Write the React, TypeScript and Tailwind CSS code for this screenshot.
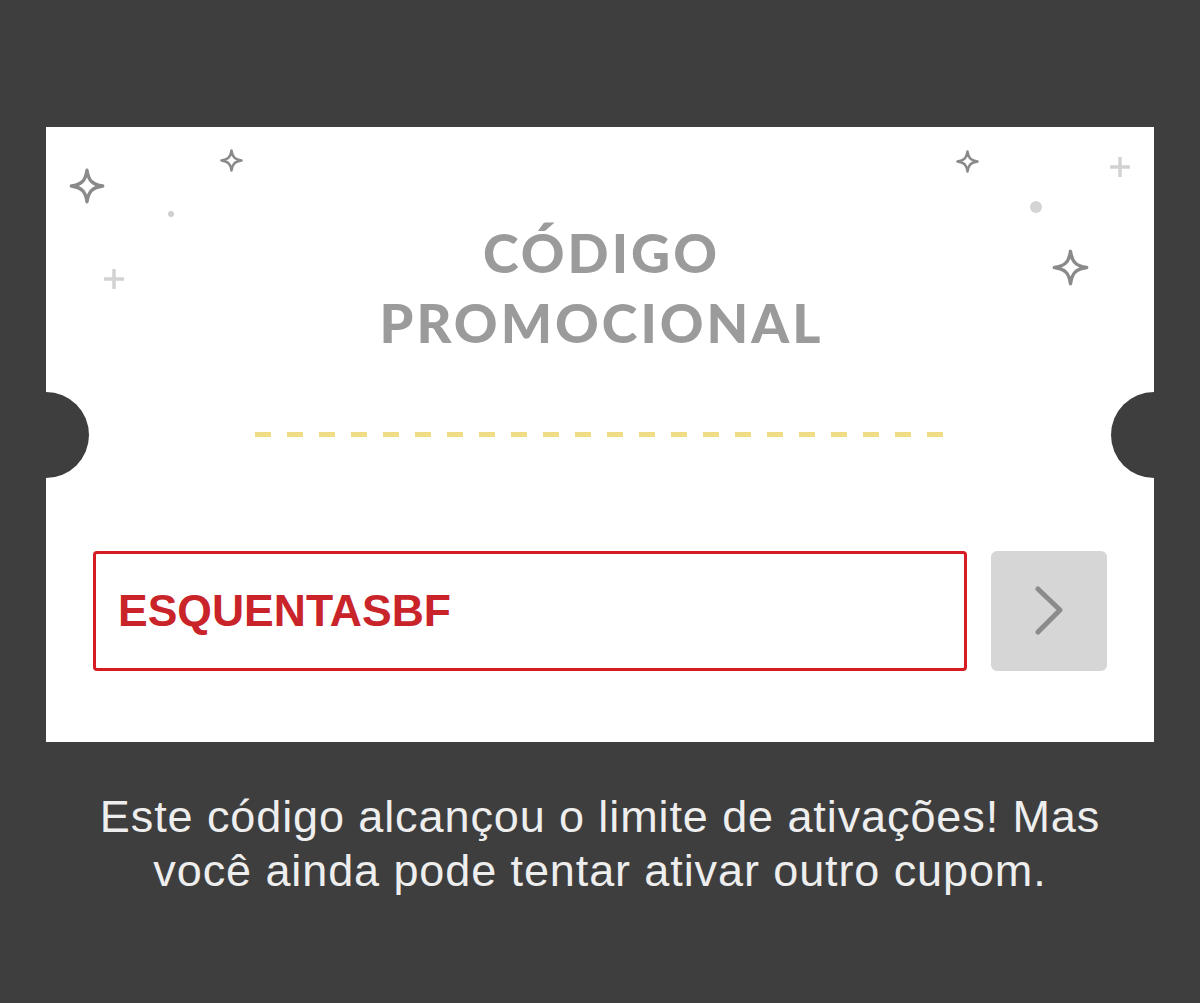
import React from "react";

function Sparkle({ size, className }: { size: number; className: string }) {
  return (
    <svg width={size} height={size} viewBox="0 0 24 24" className={className} fill="none">
      <path
        d="M12 1.5 C13 8.5 15.5 11 22.5 12 C15.5 13 13 15.5 12 22.5 C11 15.5 8.5 13 1.5 12 C8.5 11 11 8.5 12 1.5 Z"
        stroke="#8a8a8a"
        strokeWidth={size > 30 ? 2.2 : 2.6}
        strokeLinejoin="round"
      />
    </svg>
  );
}

function Plus({ className }: { className: string }) {
  return (
    <svg width="20" height="20" viewBox="0 0 20 20" className={className}>
      <path d="M10 1 V19 M1 10 H19" stroke="#d2d2d2" strokeWidth="3.5" strokeLinecap="round" />
    </svg>
  );
}

export default function App() {
  return (
    <div
      className="w-[1200px] h-[1003px] bg-[#3e3e3e] flex flex-col items-center pt-[127px]"
      style={{ fontFamily: '"Liberation Sans", Arial, sans-serif' }}
    >
      <div className="relative w-[1108px] h-[615px] bg-white flex flex-col items-center">
        {/* decorations */}
        <Sparkle size={36} className="absolute left-[23px] top-[41px]" />
        <Sparkle size={23} className="absolute left-[174px] top-[22px]" />
        <div className="absolute left-[122px] top-[84px] w-[6px] h-[6px] rounded-full bg-[#cfcfcf]" />
        <Plus className="absolute left-[58px] top-[142px]" />
        <Sparkle size={23} className="absolute left-[910px] top-[23px]" />
        <Plus className="absolute left-[1064px] top-[30px]" />
        <div className="absolute left-[984px] top-[74px] w-[12px] h-[12px] rounded-full bg-[#d4d4d4]" />
        <Sparkle size={37} className="absolute left-[1006px] top-[122px]" />

        {/* notches */}
        <div className="absolute left-[-43px] top-[265px] w-[86px] h-[86px] rounded-full bg-[#3e3e3e]" />
        <div className="absolute right-[-43px] top-[265px] w-[86px] h-[86px] rounded-full bg-[#3e3e3e]" />

        <h1
          className="mt-[91px] pl-[3px] text-center text-[#9b9b9b] font-black uppercase text-[54px] leading-[70px] tracking-[3px]"
          style={{ fontFamily: 'Lato, "DejaVu Sans", sans-serif' }}
        >
          Código
          <br />
          Promocional
        </h1>

        <div className="mt-[74px] w-[690px] h-[5px] flex gap-[16px] overflow-hidden">
          {Array.from({ length: 22 }).map((_, i) => (
            <div key={i} className="w-[16px] h-[5px] shrink-0 bg-[#f1dc86]" />
          ))}
        </div>

        <div className="mt-[114px] w-[1014px] flex gap-[24px]">
          <div className="w-[874px] h-[120px] border-[3px] border-[#d51c22] rounded-[4px] flex items-center pl-[22px]">
            <span className="text-[#c9242a] font-bold text-[44.5px]">ESQUENTASBF</span>
          </div>
          <div className="w-[116px] h-[120px] rounded-[6px] bg-[#d6d6d6] flex items-center justify-center">
            <svg width="32" height="50" viewBox="0 0 32 50" fill="none">
              <path d="M5 3 L27 24 L5 46" stroke="#8b8b8b" strokeWidth="5" strokeLinecap="round" strokeLinejoin="round" />
            </svg>
          </div>
        </div>
      </div>

      <p className="mt-[48px] text-center text-[#eeeeee] text-[45px] leading-[54px] tracking-[0.9px]">
        Este código alcançou o limite de ativações! Mas
        <br />
        você ainda pode tentar ativar outro cupom.
      </p>
    </div>
  );
}
